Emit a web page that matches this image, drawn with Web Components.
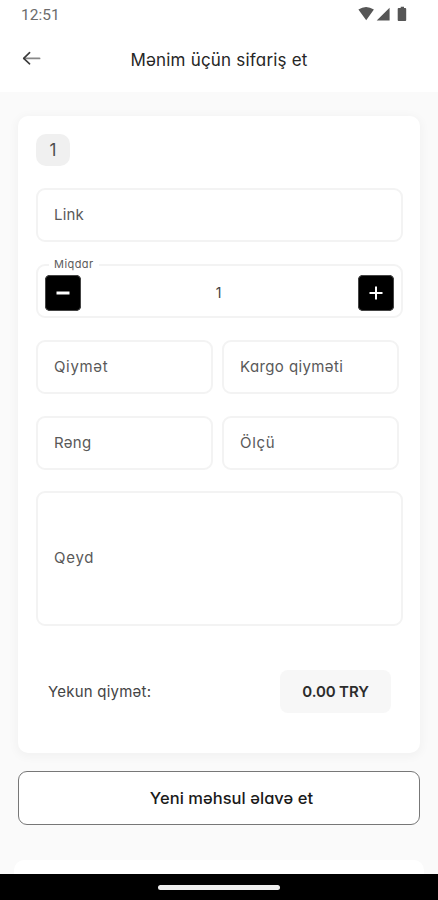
<!DOCTYPE html>
<html lang="az">
<head>
<meta charset="utf-8">
<title>Mənim üçün sifariş et</title>
<style>
html, body { margin: 0; height: 100%; overflow: hidden; background: #fafafa; }
body { font-family: Inter, "Noto Sans", sans-serif; font-feature-settings: "cv11" 1; color: #333; }
</style>
</head>
<body>
<order-screen></order-screen>
<script>
const define = (name, markup, setup) => customElements.define(name, class extends HTMLElement {
  connectedCallback() {
    if (this.shadowRoot) return;
    this.attachShadow({ mode: 'open' }).innerHTML = markup;
    if (setup) setup(this, this.shadowRoot);
  }
});

define('status-bar', `
<style>
:host { display: flex; height: 28px; box-sizing: border-box; padding: 1px 30px 0 21px; align-items: center; justify-content: space-between; background: #fff; color: #6c6c6c; font: 15.5px/28px Roboto, sans-serif; }
svg { display: block; width: 50px; height: 28px; margin-top: -1px; fill: #565656; }
</style>
<span>12:51</span>
<svg viewBox="0 0 50 28"><path d="M.4 9.6Q8 4.6 15.9 9.6L8.2 20.3zM31.6 7.8V20.6H18.7zM40.6 8.1h2.1V6.8h3.3v1.3h1.3q.9 0 .9.9v11q0 .9-.9.9h-6.7q-.9 0-.9-.9V9q0-.9.9-.9z"/></svg>`);

define('title-bar', `
<style>
:host { display: grid; grid-template-columns: 48px 1fr 48px; height: 64px; align-items: center; background: #fff; color: #262626; }
svg { margin: -4px 0 0 22px; width: 20px; height: 18px; fill: none; stroke-linecap: round; stroke-linejoin: round; }
h1 { margin: 0; padding-bottom: 1px; text-align: center; font-size: 17px; font-weight: 400; line-height: 24px; letter-spacing: .2px; white-space: nowrap; }
</style>
<svg viewBox="0 0 20 18"><path d="M2 9.4H17.5" stroke="#888" stroke-width="1.9"/><path d="M7.6 3.6L1.7 9.4l5.9 5.4" stroke="#3a3a3a" stroke-width="1.6"/></svg>
<h1><slot></slot></h1>`);

define('order-card', `
<style>
:host { display: flex; flex-direction: column; box-sizing: border-box; height: 637px; padding: 18px 17px 0 18px; border-radius: 10px; background: #fff; box-shadow: 0 2px 10px 2px rgba(0,0,0,.035); }
</style><slot></slot>`);

define('index-badge', `
<style>
:host { display: block; width: 34px; height: 32px; border-radius: 10px; background: #f0f0f0; text-align: center; font-size: 17px; line-height: 33px; color: #4d4d4d; margin-bottom: 22px; }
</style><slot></slot>`);

define('text-field', `
<style>
:host { display: flex; align-items: center; box-sizing: border-box; height: var(--h, 54px); padding: 0 16px 1px; border: 2px solid #f3f3f3; border-radius: 9px; background: #fff; font-size: 15px; line-height: 20px; letter-spacing: var(--ls, 0); color: #595959; white-space: nowrap; }
</style><slot></slot>`);

define('step-button', `
<style>
:host { display: grid; place-items: center; width: 36px; height: 36px; border-radius: 5px; background: #000; box-shadow: inset 0 0 0 1px #444; }
svg { width: 36px; height: 36px; stroke: #fff; stroke-width: 2; }
</style>
<svg viewBox="0 0 36 36"><path/></svg>`, (host, root) => {
  const plus = host.getAttribute('kind') === 'plus';
  const path = root.querySelector('path');
  path.setAttribute('d', plus ? 'M11.5 18h13M18 11.5v13' : 'M11.5 18h13');
  if (!plus) path.setAttribute('stroke-width', '3');
});

define('quantity-field', `
<style>
:host { display: flex; position: relative; box-sizing: border-box; height: 54px; padding: 0 7px; align-items: center; justify-content: space-between; border: 2px solid #f3f3f3; border-radius: 9px; font-size: 14px; color: #444; }
label { position: absolute; left: 11px; top: -10px; padding: 0 5px; background: #fff; font-size: 11px; line-height: 16px; letter-spacing: .45px; color: #5c5c5c; }
step-button { margin-top: 3px; }
span { margin: 3px 2px 0 0; }
</style>
<label>Miqdar</label><step-button kind="minus"></step-button><span><slot></slot></span><step-button kind="plus"></step-button>`);

define('field-row', `
<style>
:host { display: grid; grid-template-columns: 177px 177px; gap: 9px; }
</style><slot></slot>`);

define('total-row', `
<style>
:host { display: flex; align-items: center; justify-content: space-between; height: 43px; padding: 0 12px; margin-top: 22px; font-size: 15px; color: #444; letter-spacing: .22px; white-space: nowrap; }
b { width: 111px; height: 43px; border-radius: 8px; background: #f7f7f7; text-align: center; line-height: 43px; font-size: 15px; font-weight: 600; color: #2c2c2c; letter-spacing: -.12px; }
</style>
<span>Yekun qiymət:</span><b><slot></slot></b>`);

define('outline-button', `
<style>
:host { display: flex; box-sizing: border-box; height: 54px; padding-left: 25px; align-items: center; justify-content: center; border: 1px solid #777; border-radius: 9px; background: #fff; color: #1a1a1a; font-size: 16.5px; font-weight: 500; letter-spacing: .04px; white-space: nowrap; }
</style><slot></slot>`);

define('nav-handle', `
<style>
:host { display: flex; height: 26px; box-sizing: border-box; padding-top: 11px; justify-content: center; background: #000; }
i { width: 122px; height: 5px; border-radius: 3px; background: #eee; }
</style><i></i>`);

define('order-screen', `
<style>
:host { display: flex; flex-direction: column; width: 438px; height: 900px; background: #fafafa; }
main { flex: 1; display: flex; flex-direction: column; padding: 24px 18px 0; }
.stack { display: flex; flex-direction: column; gap: 22px; }
.note { --h: 135px; --ls: .75px; margin-top: -1px; }
outline-button { margin-top: 18px; }
.sheet { height: 14px; margin: auto -4px 0; border-radius: 10px 10px 0 0; background: #fff; }
</style>
<status-bar></status-bar>
<title-bar>Mənim üçün sifariş et</title-bar>
<main>
<order-card>
<index-badge>1</index-badge>
<div class="stack">
<text-field style="--ls:.2px">Link</text-field>
<quantity-field>1</quantity-field>
<field-row><text-field style="--ls:.65px">Qiymət</text-field><text-field style="--ls:.4px">Kargo qiyməti</text-field></field-row>
<field-row><text-field style="--ls:.3px">Rəng</text-field><text-field style="--ls:.7px">Ölçü</text-field></field-row>
<text-field class="note">Qeyd</text-field>
<total-row>0.00 TRY</total-row>
</div>
</order-card>
<outline-button>Yeni məhsul əlavə et</outline-button>
<div class="sheet"></div>
</main>
<nav-handle></nav-handle>`);
</script>
</body>
</html>
